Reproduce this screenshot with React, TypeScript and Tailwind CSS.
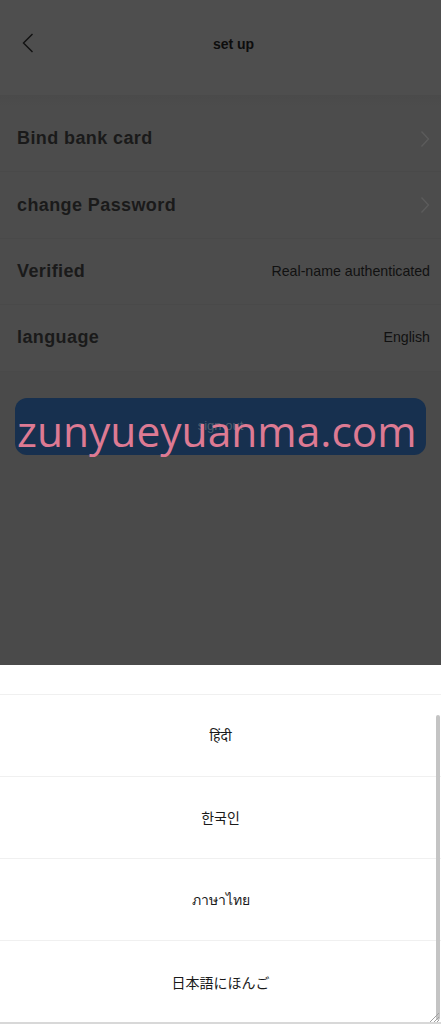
import React from "react";

const Chevron = () => (
  <svg width="10" height="18" viewBox="0 0 10 18" fill="none">
    <path d="M1.5 1.5 L8.5 9 L1.5 16.5" stroke="#5c5c5c" strokeWidth="1.3" />
  </svg>
);

function Row({ label, right, chevron }: { label: string; right?: string; chevron?: boolean }) {
  return (
    <div className="flex h-[66.4px] items-center justify-between border-b border-[#494949] pl-[17px] pr-[11px]">
      <span className="text-[18px] font-bold tracking-[0.4px] text-[#1a1a1a]">{label}</span>
      {right && <span className="text-[14.2px] text-[#111111]">{right}</span>}
      {chevron && <Chevron />}
    </div>
  );
}

export default function App() {
  const langs = ["हिंदी", "한국인", "ภาษาไทย", "日本語にほんご"];
  return (
    <div
      className="relative flex h-[1024px] w-[441px] flex-col overflow-hidden bg-[#4b4b4b]"
      style={{ fontFamily: '"Liberation Sans", Arial, "Noto Sans", "Noto Sans CJK JP", sans-serif' }}
    >
      {/* header */}
      <div className="relative flex h-[95px] items-start justify-center bg-[#4e4e4e] pl-[26px] pt-[36px]">
        <div className="absolute left-[22px] top-[33px]">
          <svg width="12" height="20" viewBox="0 0 12 20" fill="none">
            <path d="M10.5 1 L1.5 10 L10.5 19" stroke="#111111" strokeWidth="1.4" />
          </svg>
        </div>
        <span className="text-[14px] font-bold leading-[16px] text-[#0d0d0d]">set up</span>
      </div>
      <div className="h-[11px] bg-gradient-to-b from-[#4a4a4a] to-[#4c4c4c]" />
      <div className="flex flex-col bg-[#4c4c4c]">
        <Row label="Bind bank card" chevron />
        <Row label="change Password" chevron />
        <Row label="Verified" right="Real-name authenticated" />
        <Row label="language" right="English" />
      </div>
      <div className="flex-1 bg-[#4a4a4a] px-[15px] pt-[26px]">
        <div className="relative flex h-[57px] items-center justify-center rounded-[12px] bg-[#17304f]">
          <span className="text-[13px] text-[#4d5d6e]">sign out</span>
          <span
            className="absolute left-[2px] top-[12px] text-[42.5px] leading-[42px] text-[#dd7a93]"
            style={{ fontFamily: '"Open Sans", "Noto Sans", sans-serif' }}
          >
            zunyueyuanma.com
          </span>
        </div>
      </div>
      {/* bottom sheet */}
      <div className="relative h-[359px] shrink-0 bg-white">
        <div className="h-[30px] border-b border-[#f0f0f0]" />
        {langs.map((l, i) => (
          <div
            key={l}
            className={`flex h-[82px] items-center justify-center text-[14px] text-[#1a1a1a] ${i < 3 ? "border-b border-[#f0f0f0]" : ""}`}
            style={{ fontFamily: '"Noto Sans", "Liberation Sans", "Noto Sans CJK JP", "Noto Sans CJK KR", sans-serif' }}
          >
            {l}
          </div>
        ))}
        {/* scrollbar */}
        <div className="absolute right-[1px] top-[50px] h-[305px] w-[4px] rounded-sm bg-[#c4c4c4]" />
        <div className="absolute bottom-[1px] right-[1px]">
          <svg width="12" height="12" viewBox="0 0 12 12">
            <path d="M11 2 L2 11 M11 6 L6 11 M11 9 L9 11" stroke="#a0a0a0" strokeWidth="1" />
          </svg>
        </div>
        <div className="absolute bottom-0 left-0 h-[2px] w-full bg-[#d8d8d8]" />
      </div>
    </div>
  );
}
